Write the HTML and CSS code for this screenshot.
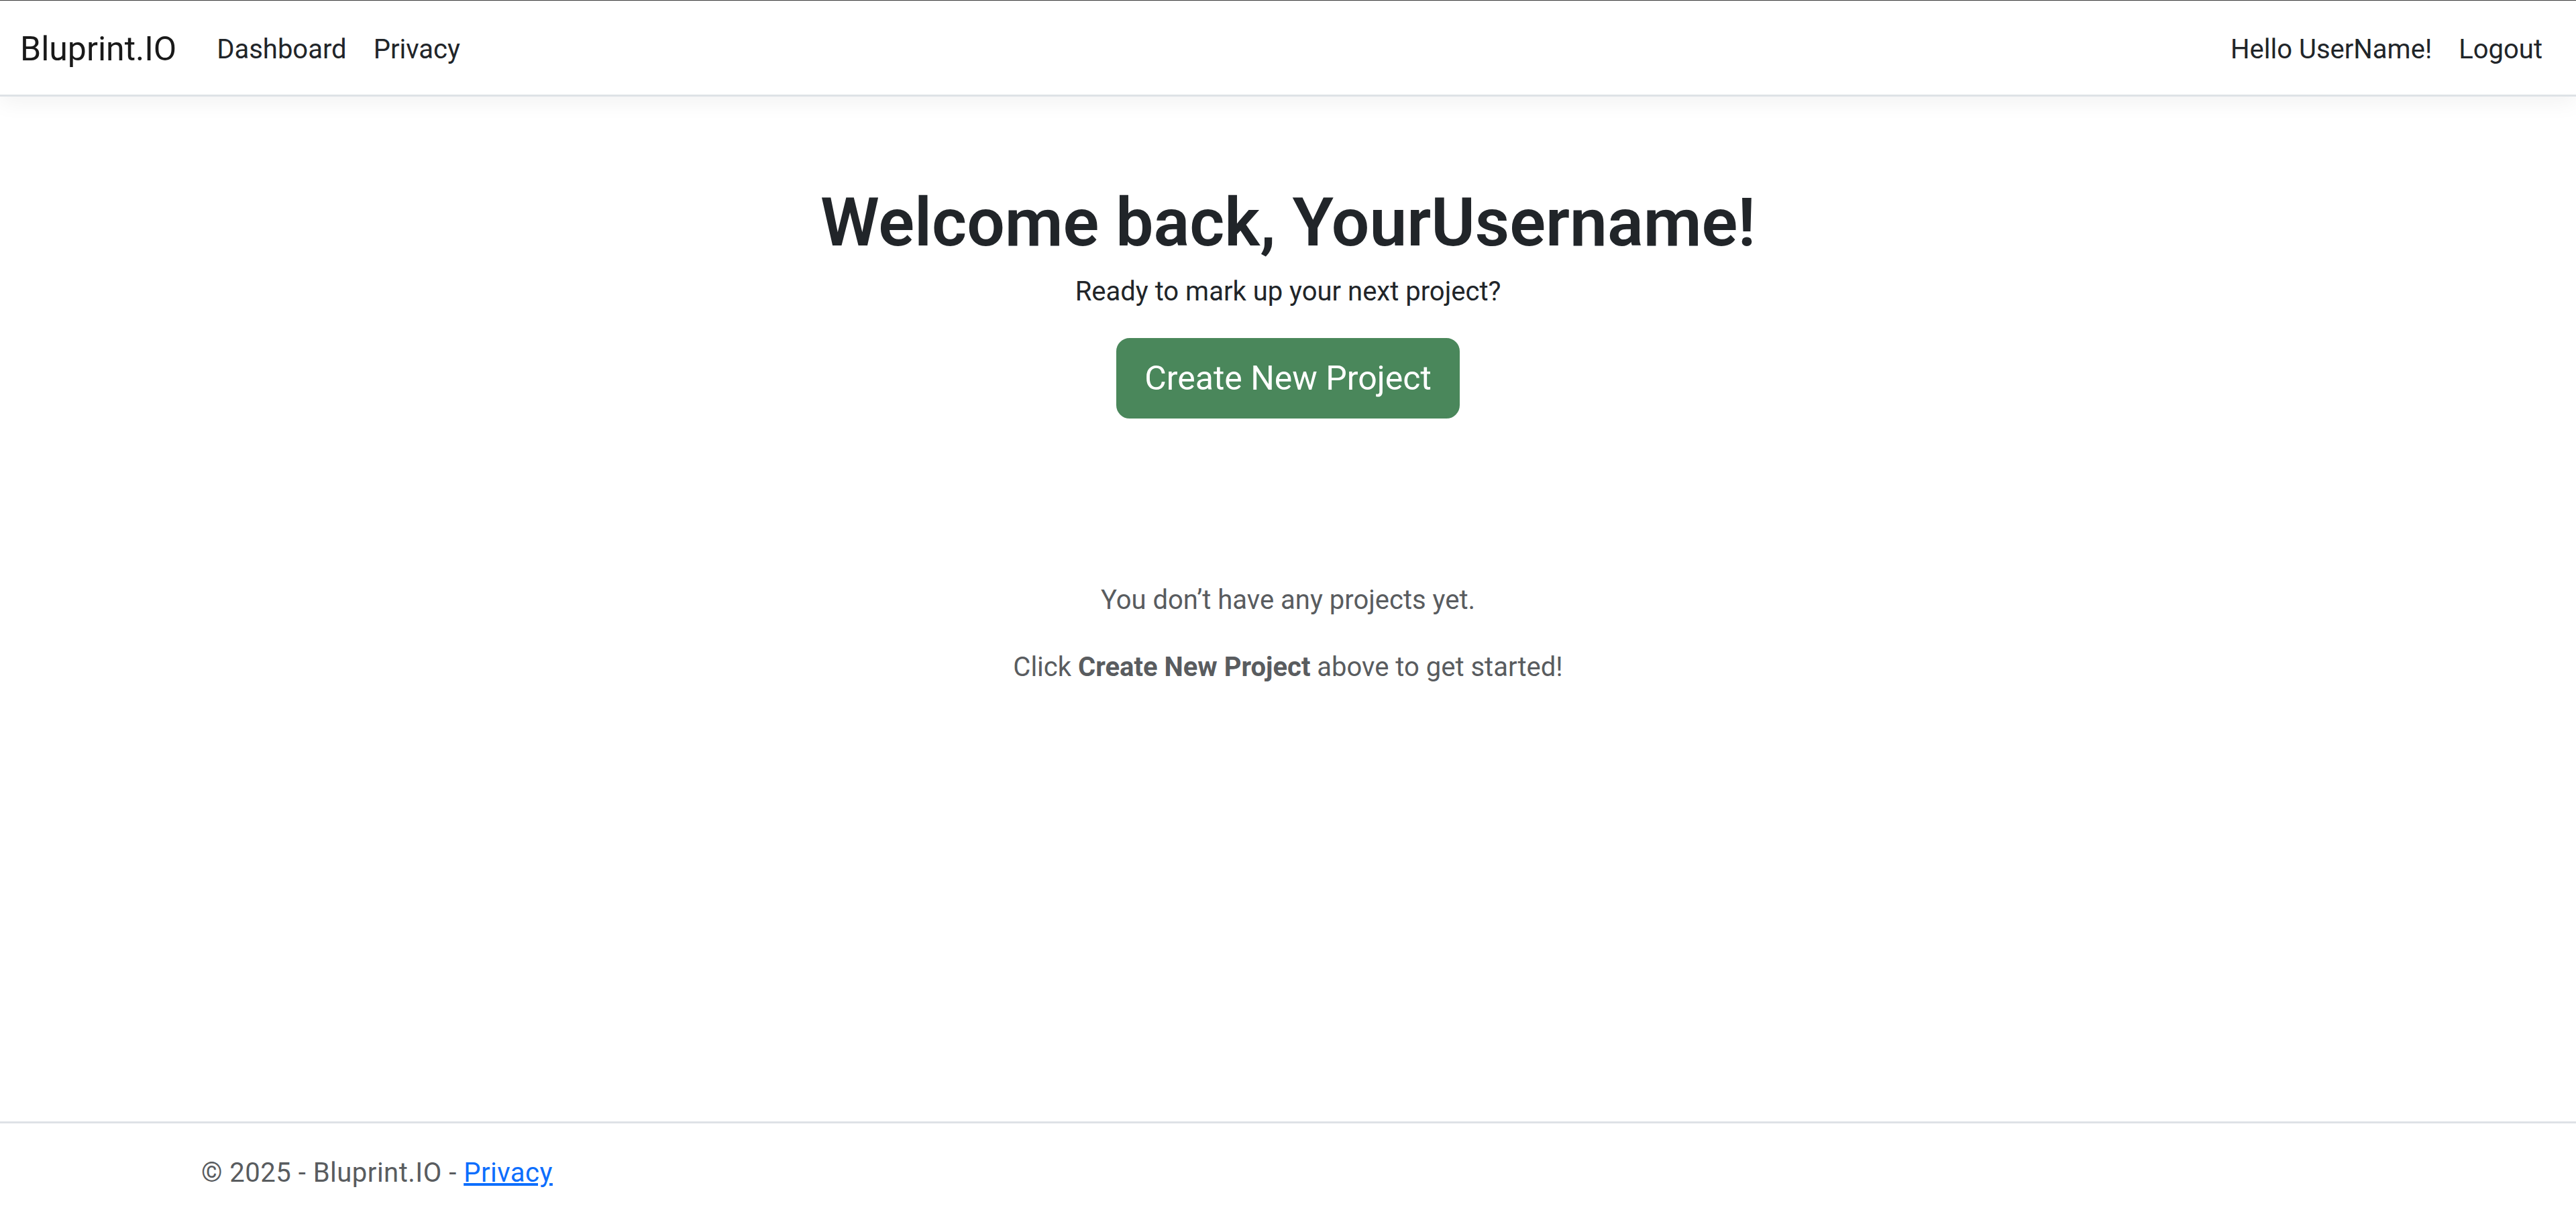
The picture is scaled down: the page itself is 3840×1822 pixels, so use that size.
FILE: index.html
```html
<!DOCTYPE html>
<html lang="en">
<head>
<meta charset="utf-8">
<title>Dashboard - Bluprint.IO</title>
<link rel="stylesheet" href="styles.css">
</head>
<body>
<header class="topbar">
  <nav class="navbar">
    <a class="brand" href="#">Bluprint.IO</a>
    <ul class="nav-list nav-left">
      <li><a class="nav-link" href="#">Dashboard</a></li>
      <li><a class="nav-link" href="#">Privacy</a></li>
    </ul>
    <ul class="nav-list nav-right">
      <li><a class="nav-link" href="#">Hello UserName!</a></li>
      <li><a class="nav-link" href="#">Logout</a></li>
    </ul>
  </nav>
</header>

<div class="container">
  <main class="main">
    <section class="hero">
      <h1 class="hero-title">Welcome back, YourUsername!</h1>
      <p class="hero-sub">Ready to mark up your next project?</p>
      <div class="hero-actions">
        <a class="btn-create" href="#">Create New Project</a>
      </div>
    </section>

    <section class="empty">
      <p class="empty-line">You don’t have any projects yet.</p>
      <p class="empty-line">Click <strong>Create New Project</strong> above to get started!</p>
    </section>
  </main>
</div>

<footer class="footer">
  <div class="container">© 2025 - Bluprint.IO - <a class="footer-link" href="#">Privacy</a></div>
</footer>
</body>
</html>
```
FILE: styles.css
```css
html, body {
  margin: 0;
  padding: 0;
}

body {
  font-family: Roboto, "Liberation Sans", sans-serif;
  font-size: 40px;
  line-height: 1.5;
  color: #212529;
  background: #fff;
  min-height: 100vh;
  box-sizing: border-box;
  border-top: 1px solid #3c3c3c;
  display: flex;
  flex-direction: column;
}

/* ---------- navbar ---------- */
.topbar {
  margin-bottom: 40px;
}

.navbar {
  display: flex;
  align-items: center;
  padding: 20px 30px;
  background: #fff;
  border-bottom: 3px solid #dee2e6;
  box-shadow: 0 10px 30px rgba(0, 0, 0, 0.05);
}

.brand {
  font-size: 50px;
  line-height: 75px;
  padding: 15px 0 10px;
  margin-right: 40px;
  color: rgba(0, 0, 0, 0.9);
  text-decoration: none;
  white-space: nowrap;
}

.nav-list {
  display: flex;
  list-style: none;
  margin: 0;
  padding: 0;
}

.nav-left {
  flex-grow: 1;
}

.nav-link {
  display: block;
  padding: 23px 20px 17px;
  line-height: 60px;
  color: #212529;
  text-decoration: none;
  white-space: nowrap;
}

/* ---------- main ---------- */
.container {
  width: 3300px;
  max-width: 100%;
  margin: 0 auto;
  padding: 0 30px;
  box-sizing: border-box;
}

.main {
  padding-bottom: 40px;
}

.hero {
  text-align: center;
  padding-top: 88px;
}

.hero-title {
  font-size: 100px;
  font-weight: 600;
  line-height: 1.2;
  margin: 0 0 13px;
  color: #212529;
}

.hero-sub {
  margin: 0 0 39px;
}

.hero-actions {
  display: flex;
  justify-content: center;
}

.btn-create {
  display: inline-block;
  font-size: 50px;
  line-height: 75px;
  padding: 21px 40px 20px;
  border: 2px solid #4a875b;
  border-radius: 20px;
  background: #4a875b;
  color: #fff;
  text-decoration: none;
  white-space: nowrap;
}

.empty {
  margin-top: 241px;
  text-align: center;
  color: #595c5f;
}

.empty-line {
  margin: 0 0 40px;
}

.empty-line strong {
  font-weight: 700;
}

/* ---------- footer ---------- */
.footer {
  margin-top: auto;
  border-top: 3px solid #dee2e6;
  line-height: 147px;
  color: #595c5f;
  white-space: nowrap;
  letter-spacing: 0.5px;
}

.footer-link {
  color: #0d6efd;
  text-decoration: underline;
}
```
